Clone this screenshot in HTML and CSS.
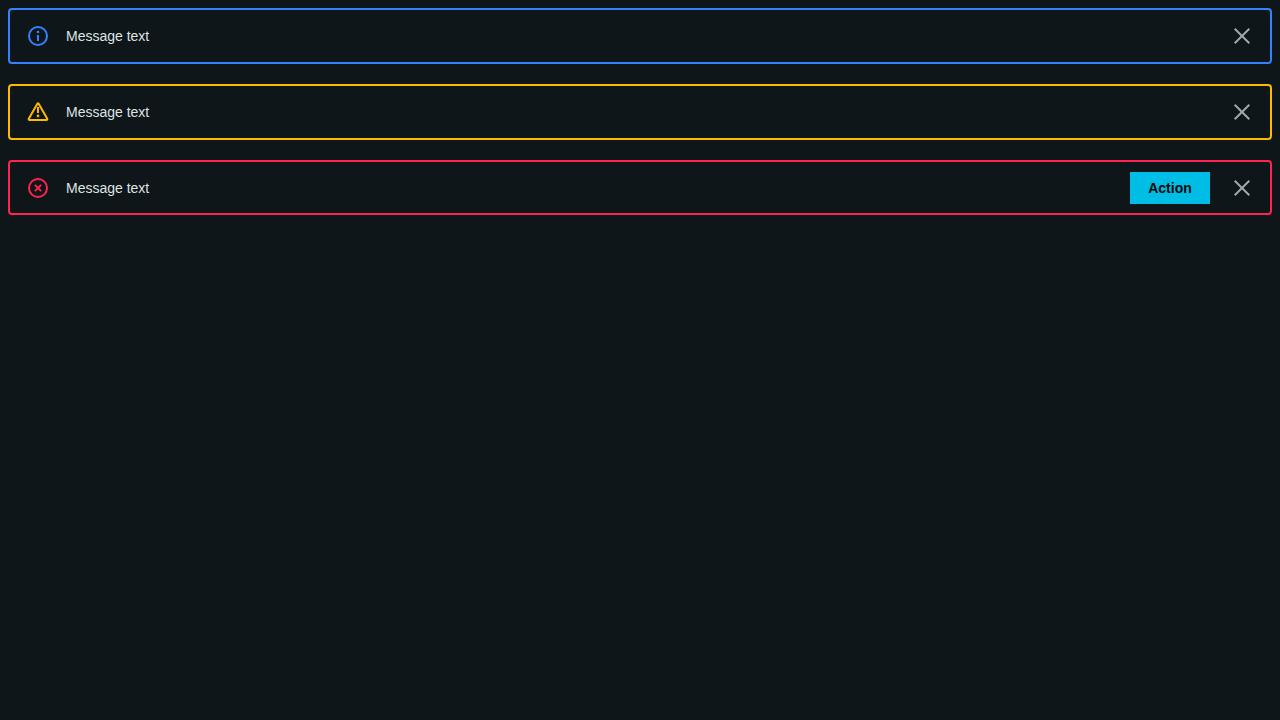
FILE: index.html
```html
<!DOCTYPE html>
<html lang="en">
<head>
<meta charset="utf-8">
<title>Messages</title>
<link rel="stylesheet" href="styles.css">
</head>
<body>
<main class="messages">
  <div class="message message-info" role="status">
    <svg class="message-icon" viewBox="0 0 24 24" aria-hidden="true">
      <circle cx="12" cy="12" r="9" />
      <path d="M12 11v6" />
      <circle class="dot" cx="12" cy="8" r="1.35" />
    </svg>
    <span class="message-text">Message text</span>
    <button class="message-close" aria-label="Close">
      <svg viewBox="0 0 24 24" aria-hidden="true"><path d="M4.7 4.7l14.6 14.6M19.3 4.7L4.7 19.3" /></svg>
    </button>
  </div>
  <div class="message message-warning" role="status">
    <svg class="message-icon" viewBox="0 0 24 24" aria-hidden="true">
      <path d="M11.35 3.7a.75.75 0 0 1 1.3 0l8.6 15.1a.8.8 0 0 1-.7 1.2H3.45a.8.8 0 0 1-.7-1.2z" />
      <path d="M12 7v6" />
      <circle class="dot" cx="12" cy="15.9" r="1.3" />
    </svg>
    <span class="message-text">Message text</span>
    <button class="message-close" aria-label="Close">
      <svg viewBox="0 0 24 24" aria-hidden="true"><path d="M4.7 4.7l14.6 14.6M19.3 4.7L4.7 19.3" /></svg>
    </button>
  </div>
  <div class="message message-error" role="alert">
    <svg class="message-icon" viewBox="0 0 24 24" aria-hidden="true">
      <circle cx="12" cy="12" r="9" />
      <path d="M8.9 8.9l6.2 6.2M15.1 8.9l-6.2 6.2" />
    </svg>
    <span class="message-text">Message text</span>
    <button class="message-action">Action</button>
    <button class="message-close" aria-label="Close">
      <svg viewBox="0 0 24 24" aria-hidden="true"><path d="M4.7 4.7l14.6 14.6M19.3 4.7L4.7 19.3" /></svg>
    </button>
  </div>
</main>
</body>
</html>
```
FILE: styles.css
```css
* {
  box-sizing: border-box;
}

body {
  margin: 8px;
  background: #0e1619;
  color: #dfe3e5;
  font: 14px/20px "Liberation Sans", Arial, sans-serif;
}

.messages {
  display: flex;
  flex-direction: column;
  gap: 20px;
}

.message {
  display: flex;
  align-items: flex-start;
  height: 56px;
  padding: 10px 16px;
  border: 2px solid;
  border-radius: 4px;
}

.message-info {
  border-color: #3381ff;
}

.message-warning {
  border-color: #ffb900;
}

.message-error {
  height: 55px;
  border-color: #ff2351;
}

.message-icon {
  width: 24px;
  height: 24px;
  margin: 4px 16px 0 0;
  fill: none;
  stroke-width: 2;
}

.message-info .message-icon {
  stroke: #3381ff;
}

.message-warning .message-icon {
  stroke: #ffb900;
}

.message-error .message-icon {
  stroke: #ff2351;
}

.message-info .dot {
  fill: #3381ff;
  stroke: none;
}

.message-warning .dot {
  fill: #ffb900;
  stroke: none;
}

.message-text {
  flex: 1;
  padding-top: 6px;
}

.message-action {
  width: 80px;
  height: 32px;
  margin-right: 20px;
  padding: 0;
  border: 0;
  background: #00bde6;
  color: #050708;
  font: bold 14px/20px "Liberation Sans", Arial, sans-serif;
}

.message-close {
  width: 24px;
  height: 24px;
  margin-top: 4px;
  padding: 0;
  border: 0;
  background: none;
}

.message-close svg {
  display: block;
  width: 24px;
  height: 24px;
  fill: none;
  stroke: #9fa7aa;
  stroke-width: 2;
}
```
